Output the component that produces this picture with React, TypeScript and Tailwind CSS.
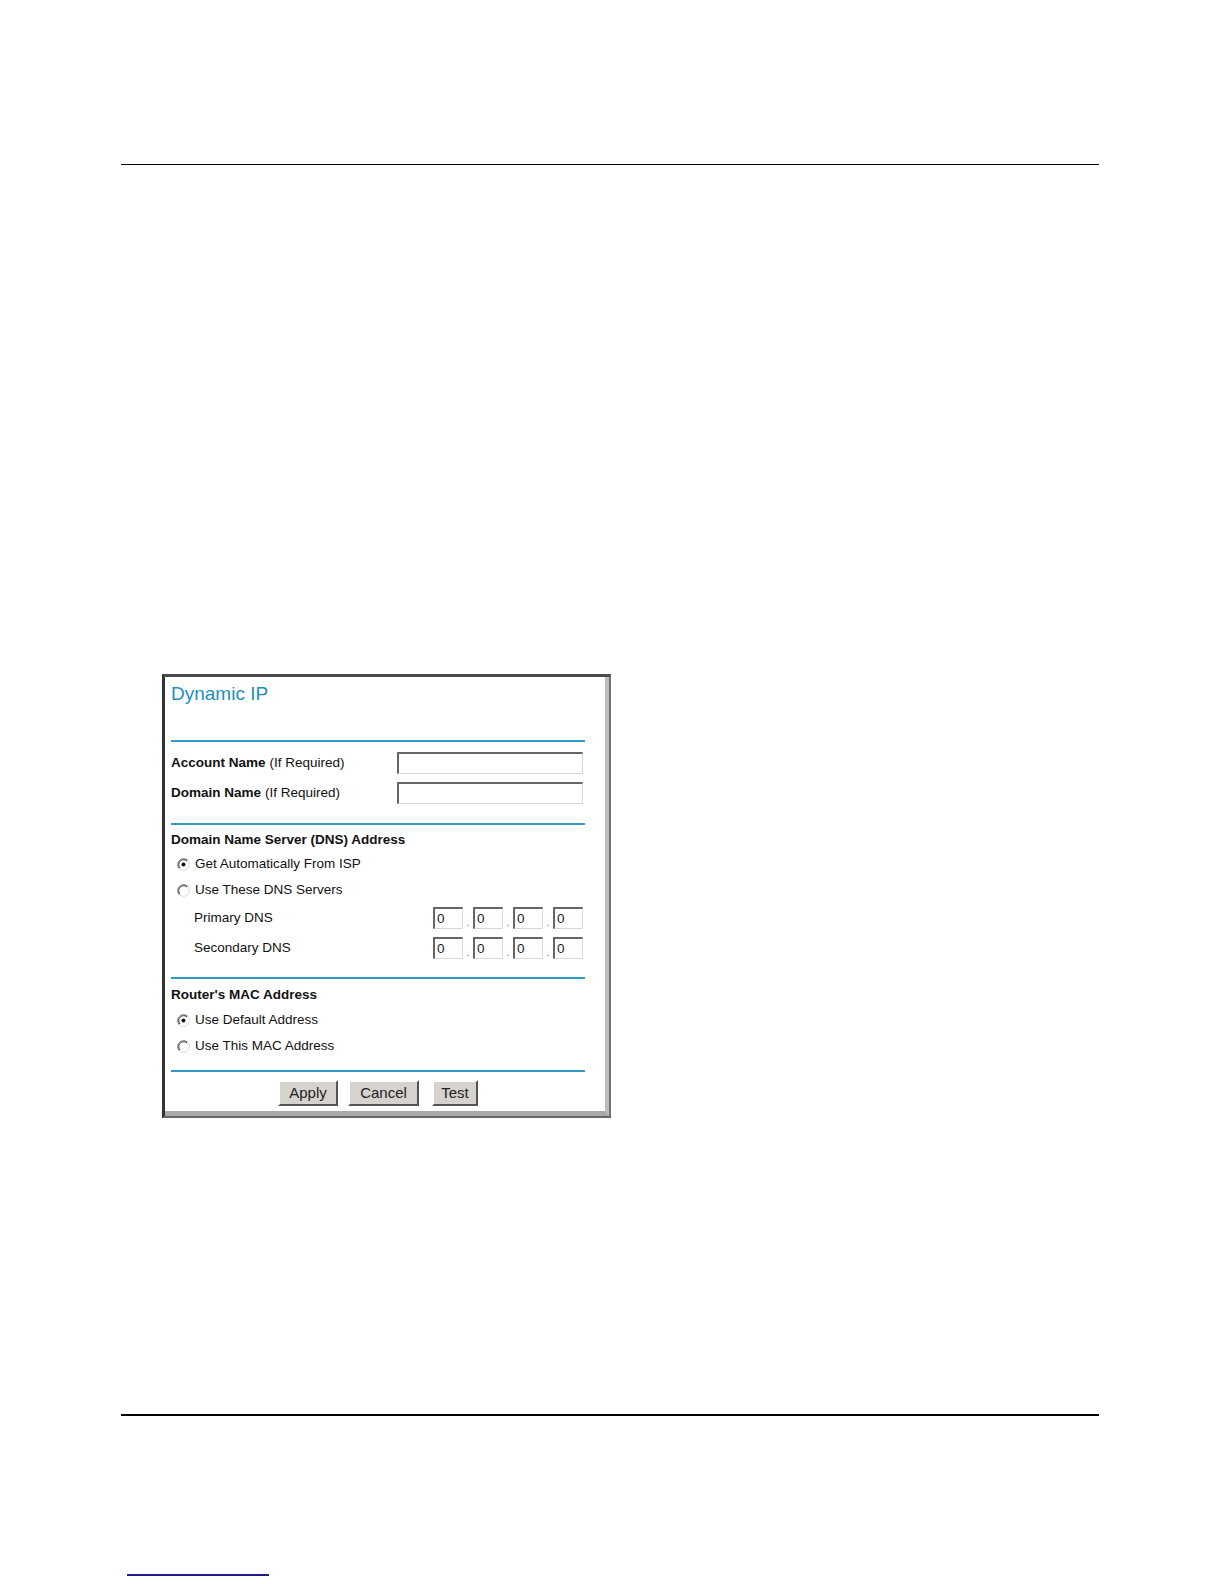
import React from 'react';

const Radio: React.FC<{ checked?: boolean }> = ({ checked }) => (
  <svg width="13" height="13" viewBox="0 0 13 13" className="shrink-0">
    <circle cx="6.5" cy="6.5" r="6" fill="#ffffff" />
    {/* outer + inner top-left shade */}
    <path d="M10.74 2.26 A6 6 0 0 0 2.26 10.74" fill="none" stroke="#7a7a7a" strokeWidth="1" />
    <path d="M10.03 2.97 A5 5 0 0 0 2.97 10.03" fill="none" stroke="#333333" strokeWidth="1" />
    {/* bottom-right light edge */}
    <path d="M10.74 2.26 A6 6 0 0 1 2.26 10.74" fill="none" stroke="#d8d8d8" strokeWidth="1" />
    {checked && <circle cx="6.5" cy="6.5" r="2" fill="#111111" />}
  </svg>
);

const TextBox: React.FC<{ className?: string; value?: string }> = ({ className = '', value = '' }) => (
  <div
    className={`h-[22px] bg-white border-t-2 border-l-2 border-r border-b border-t-[#666] border-l-[#666] border-r-[#d8d8d8] border-b-[#d8d8d8] pl-[2px] text-[13.5px] leading-[19px] text-[#222] ${className}`}
  >
    {value}
  </div>
);

const IpField: React.FC = () => (
  <div className="flex items-end">
    <TextBox className="w-[30px]" value="0" />
    <span className="w-[10px] text-center text-[10px] leading-[12px] text-[#777]">.</span>
    <TextBox className="w-[30px]" value="0" />
    <span className="w-[10px] text-center text-[10px] leading-[12px] text-[#777]">.</span>
    <TextBox className="w-[30px]" value="0" />
    <span className="w-[10px] text-center text-[10px] leading-[12px] text-[#777]">.</span>
    <TextBox className="w-[30px]" value="0" />
  </div>
);

const Rule: React.FC<{ className?: string }> = ({ className = '' }) => (
  <div className={`h-[2px] bg-[#2f9bc6] ${className}`} />
);

const Btn: React.FC<{ label: string; w: string }> = ({ label, w }) => (
  <button
    className={`${w} h-[26px] bg-[#d6d3ce] border-2 border-t-white border-l-white border-r-[#555] border-b-[#555] text-[15px] leading-[20px] text-[#222]`}
  >
    {label}
  </button>
);

export default function App() {
  return (
    <div className="w-full h-[1584px] bg-white pt-[164px] font-['Liberation_Sans',Arial,sans-serif] text-[#111]">
      <div className="ml-[121px] w-[978px] h-px bg-black" />

      {/* Dynamic IP settings panel */}
      <div className="mt-[509px] ml-[162px] w-[449px] border-t-[3px] border-l-[3px] border-r-[2px] border-b-[2px] border-t-[#4a4a4a] border-l-[#333] border-r-[#707070] border-b-[#666]">
        <div className="border-r-[4px] border-b-[5px] border-r-[#bcbcbc] border-b-[#a9a9a9] pl-[6px] pr-[20px] pt-[6px] pb-[5px]">
          <div className="text-[19px] leading-[22px] text-[#1e8fbf]">Dynamic IP</div>
          <Rule className="mt-[35px]" />

          <div className="mt-[10px] h-[22px] flex items-center text-[13.5px]">
            <span className="font-bold">Account Name</span>
            <span className="ml-[4px]">(If Required)</span>
            <TextBox className="ml-auto mr-[2px] w-[186px]" />
          </div>
          <div className="mt-[8px] h-[22px] flex items-center text-[13.5px]">
            <span className="font-bold">Domain Name</span>
            <span className="ml-[4px]">(If Required)</span>
            <TextBox className="ml-auto mr-[2px] w-[186px]" />
          </div>

          <Rule className="mt-[19px]" />
          <div className="mt-[7px] text-[13.5px] leading-[16px] font-bold">Domain Name Server (DNS) Address</div>
          <div className="mt-[3px] pl-[6px] text-[13.5px]">
            <div className="h-[26px] flex items-center gap-[5px]">
              <Radio checked />
              <span>Get Automatically From ISP</span>
            </div>
            <div className="h-[26px] flex items-center gap-[5px]">
              <Radio />
              <span>Use These DNS Servers</span>
            </div>
          </div>
          <div className="mt-[4px] h-[22px] flex items-center text-[13.5px] pl-[23px] pr-[2px]">
            <span>Primary DNS</span>
            <div className="ml-auto">
              <IpField />
            </div>
          </div>
          <div className="mt-[8px] h-[22px] flex items-center text-[13.5px] pl-[23px] pr-[2px]">
            <span>Secondary DNS</span>
            <div className="ml-auto">
              <IpField />
            </div>
          </div>

          <Rule className="mt-[18px]" />
          <div className="mt-[8px] text-[13.5px] leading-[16px] font-bold">Router's MAC Address</div>
          <div className="mt-[4px] pl-[6px] text-[13.5px]">
            <div className="h-[26px] flex items-center gap-[5px]">
              <Radio checked />
              <span>Use Default Address</span>
            </div>
            <div className="h-[26px] flex items-center gap-[5px]">
              <Radio />
              <span>Use This MAC Address</span>
            </div>
          </div>

          <Rule className="mt-[11px]" />
          <div className="mt-[8px] flex justify-center">
            <Btn label="Apply" w="w-[60px]" />
            <div className="w-[10px]" />
            <Btn label="Cancel" w="w-[71px]" />
            <div className="w-[13px]" />
            <Btn label="Test" w="w-[46px]" />
          </div>
        </div>
      </div>

      <div className="mt-[296px] ml-[121px] w-[978px] h-[2px] bg-black" />
      <div className="mt-[158px] ml-[127px] w-[142px] h-[2px] bg-[#1c1c8f]" />
    </div>
  );
}
